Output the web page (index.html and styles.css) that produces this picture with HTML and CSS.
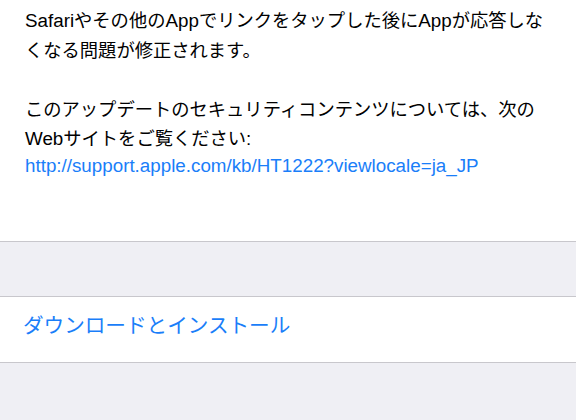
FILE: index.html
```html
<!DOCTYPE html>
<html lang="ja">
<head>
<meta charset="utf-8">
<link rel="stylesheet" href="styles.css">
</head>
<body>
<section class="notes">
  <p class="para"><span class="lat">Safari</span>やその他の<span class="lat">App</span>でリンクをタップした後に<span class="lat">App</span>が応答しな<br>くなる問題が修正されます。</p>
  <p class="para">このアップデートのセキュリティコンテンツについては、次の<br><span class="lat">Web</span>サイトをご覧ください<span class="lat">:</span></p>
  <a class="link" href="#">http://support.apple.com/kb/HT1222?viewlocale=ja_JP</a>
</section>
<div class="spacer"></div>
<div class="action">
  <span class="action-label">ダウンロードとインストール</span>
</div>
</body>
</html>
```

FILE: styles.css
```css
html, body {
  margin: 0;
  padding: 0;
}
body {
  background: #efeff4;
  width: 576px;
  height: 420px;
  overflow: hidden;
  font-family: "Liberation Sans", "Noto Sans CJK JP", sans-serif;
  color: #000;
}
.notes {
  background: #fff;
  padding: 6px 24px 0 25px;
  height: 235px;
  border-bottom: 1px solid #c8c7cc;
}
.para {
  margin: 0 0 29.5px 0;
  font-size: 18.3px;
  line-height: 29.5px;
  white-space: nowrap;
}
.para + .para {
  margin-bottom: 0;
}
.lat {
  font-size: 18.8px;
}
.link {
  display: block;
  font-size: 18.8px;
  line-height: 24px;
  color: #1a7ef9;
  text-decoration: none;
  white-space: nowrap;
}
.spacer {
  height: 54px;
}
.action {
  background: #fff;
  border-top: 1px solid #c8c7cc;
  border-bottom: 1px solid #c8c7cc;
  height: 65px;
  display: flex;
  align-items: center;
  padding-left: 23px;
}
.action-label {
  font-size: 20.6px;
  color: #1a7ef9;
  margin-top: -11px;
}
```
